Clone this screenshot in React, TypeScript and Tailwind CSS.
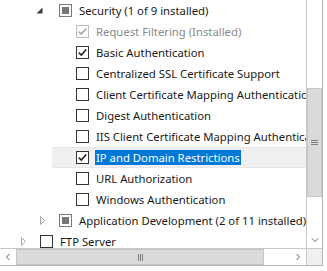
type Check = "none" | "checked" | "muted" | "partial";

interface Row {
  level: 1 | 2 | 3;
  expander?: "open" | "closed";
  check: Check;
  label: string;
  muted?: boolean;
  selected?: boolean;
}

const rows: Row[] = [
  { level: 2, expander: "open", check: "partial", label: "Security (1 of 9 installed)" },
  { level: 3, check: "muted", label: "Request Filtering (Installed)", muted: true },
  { level: 3, check: "checked", label: "Basic Authentication" },
  { level: 3, check: "none", label: "Centralized SSL Certificate Support" },
  { level: 3, check: "none", label: "Client Certificate Mapping Authentication" },
  { level: 3, check: "none", label: "Digest Authentication" },
  { level: 3, check: "none", label: "IIS Client Certificate Mapping Authentication" },
  { level: 3, check: "checked", label: "IP and Domain Restrictions", selected: true },
  { level: 3, check: "none", label: "URL Authorization" },
  { level: 3, check: "none", label: "Windows Authentication" },
  { level: 2, expander: "closed", check: "partial", label: "Application Development (2 of 11 installed)" },
  { level: 1, expander: "closed", check: "none", label: "FTP Server" },
];

const indent = { 1: "w-[16px]", 2: "w-[35px]", 3: "w-[52px]" };

function Expander({ state }: { state?: "open" | "closed" }) {
  return (
    <svg width="24" height="21" viewBox="0 0 24 21" className="shrink-0">
      {state === "open" && <polygon points="7.5,7.5 7.5,13.5 1.5,13.5" fill="#3c3c3c" />}
      {state === "closed" && (
        <polygon points="5.5,6.5 9.5,10.5 5.5,14.5" fill="none" stroke="#a6a6a6" strokeWidth="1" />
      )}
    </svg>
  );
}

function CheckBox({ state }: { state: Check }) {
  const border =
    state === "muted" ? "border-[#bcbcbc]" : state === "partial" ? "border-[#7a7a7a]" : "border-[#333333]";
  return (
    <span className={`flex h-[13px] w-[13px] shrink-0 items-center justify-center border bg-white ${border}`}>
      {state === "partial" && <span className="h-[7px] w-[7px] bg-[#777777]" />}
      {(state === "checked" || state === "muted") && (
        <svg width="11" height="11" viewBox="0 0 11 11">
          <path
            d="M1.8 5.6 L4.3 8.1 L9.2 2.4"
            fill="none"
            stroke={state === "muted" ? "#a8a8a8" : "#222222"}
            strokeWidth="1.6"
          />
        </svg>
      )}
    </span>
  );
}

function TreeRow({ row }: { row: Row }) {
  return (
    <div className="flex h-[21px] items-center whitespace-nowrap">
      <div className={`shrink-0 ${indent[row.level]}`} />
      <div
        className={`flex h-[21px] flex-1 items-center ${
          row.selected ? "bg-[#f0f0f0] shadow-[inset_0_1px_0_#e6e6e6,inset_0_-1px_0_#e6e6e6]" : ""
        }`}
      >
        <Expander state={row.expander} />
        <CheckBox state={row.check} />
        <span
          className={`ml-[6px] px-[1px] leading-[15px] ${
            row.selected ? "bg-[#0078d7] text-white" : row.muted ? "text-[#8a8a8a]" : "text-[#1a1a1a]"
          }`}
        >
          {row.label}
        </span>
      </div>
    </div>
  );
}

function Chevron({ dir }: { dir: "down" | "left" | "right" }) {
  const d =
    dir === "down" ? "M1 1.5 L4 4.5 L7 1.5" : dir === "left" ? "M4.5 1 L1.5 4 L4.5 7" : "M1.5 1 L4.5 4 L1.5 7";
  const size = dir === "down" ? { w: 8, h: 6 } : { w: 6, h: 8 };
  return (
    <svg width={size.w} height={size.h} viewBox={`0 0 ${size.w} ${size.h}`}>
      <path d={d} fill="none" stroke="#606060" strokeWidth="1" />
    </svg>
  );
}

export default function App() {
  return (
    <div className="h-[271px] w-[327px] bg-white font-['Segoe_UI','Noto_Sans',sans-serif] text-[11.3px]">
      <div className="grid h-[266px] w-[323px] grid-cols-[306px_16px] grid-rows-[248px_17px] border-r border-b border-[#b4b4b4]">
        <div className="overflow-hidden">
          {rows.map((row) => (
            <TreeRow key={row.label} row={row} />
          ))}
        </div>

        <div className="flex flex-col border-l border-[#c8c8c8] bg-white">
          <div className="h-[88px]" />
          <div className="flex h-[109px] items-center justify-center border border-[#c6c6c6] bg-[#dadada]">
            <svg width="7" height="7" viewBox="0 0 7 7">
              <path d="M0 1.5 H7 M0 3.5 H7 M0 5.5 H7" stroke="#7e7e7e" strokeWidth="1" />
            </svg>
          </div>
          <div className="flex-1" />
          <div className="flex h-[17px] items-center justify-center">
            <Chevron dir="down" />
          </div>
        </div>

        <div className="flex border-t border-[#c8c8c8] bg-white">
          <div className="flex w-[16px] items-center justify-center">
            <Chevron dir="left" />
          </div>
          <div className="flex w-[248px] items-center justify-center border border-[#c6c6c6] bg-[#dadada]">
            <svg width="7" height="7" viewBox="0 0 7 7">
              <path d="M1.5 0 V7 M3.5 0 V7 M5.5 0 V7" stroke="#7e7e7e" strokeWidth="1" />
            </svg>
          </div>
          <div className="flex-1" />
          <div className="flex w-[16px] items-center justify-center">
            <Chevron dir="right" />
          </div>
        </div>

        <div className="border-t border-l border-[#c8c8c8] bg-[#f0f0f0]" />
      </div>
    </div>
  );
}
